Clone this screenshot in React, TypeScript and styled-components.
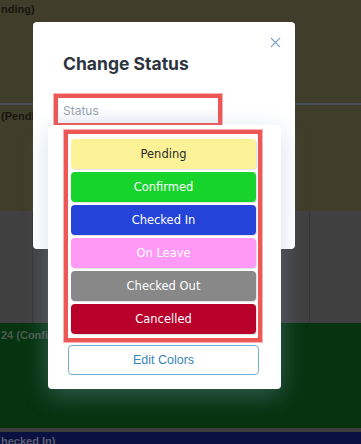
import { createGlobalStyle, styled } from "styled-components";

const GlobalStyle = createGlobalStyle`
  body {
    margin: 0;
    background: #3a3a3a;
    font-family: "DejaVu Sans", sans-serif;
  }
`;

const Page = styled.div`
  position: relative;
  width: 361px;
  height: 444px;
  overflow: hidden;
`;

const Calendar = styled.div`
  display: flex;
  flex-direction: column;
`;

const Band = styled.div<{ $bg: string; $h: number; $fg?: string }>`
  height: ${(p) => p.$h}px;
  background: ${(p) => p.$bg};
  color: ${(p) => p.$fg || "#16160e"};
  font-family: "Liberation Sans", Arial, sans-serif;
  font-weight: 700;
  font-size: 11px;
  padding-left: 1px;
  box-sizing: border-box;
  overflow: hidden;
`;

const BandText = styled.div<{ $top: number }>`
  padding-top: ${(p) => p.$top}px;
  white-space: nowrap;
`;

const Rule = styled.div<{ $bg: string; $h: number }>`
  height: ${(p) => p.$h}px;
  background: ${(p) => p.$bg};
`;

const GridBand = styled.div`
  height: 112px;
  display: grid;
  grid-template-columns: 33px 277px 1fr;
  background: #404040;
`;

const GridCell = styled.div`
  border-right: 1px solid #363636;
  &:last-child {
    border-right: none;
  }
`;

const Modal = styled.div`
  position: absolute;
  left: 33px;
  top: 22px;
  width: 262px;
  height: 227px;
  background: #ffffff;
  border-radius: 4px;
  box-sizing: border-box;
  padding: 30px 21px 0 21px;
`;

const Close = styled.button`
  position: absolute;
  right: 14px;
  top: 15px;
  width: 11px;
  height: 11px;
  padding: 0;
  border: none;
  background: none;
  display: flex;
`;

const Title = styled.h2`
  margin: 0 0 0 9px;
  font-family: Inter, sans-serif;
  font-weight: 700;
  font-size: 17.5px;
  line-height: 24px;
  color: #2c3440;
`;

const Highlight = styled.div`
  border: 4px solid #ef5656;
  box-shadow: 0 0 0 1px rgba(239, 86, 86, 0.45);
`;

const StatusBox = styled(Highlight)`
  margin-top: 18px;
  width: 160px;
  height: 25px;
`;

const StatusInput = styled.div`
  height: 100%;
  background: linear-gradient(#ffffff 40%, #f1f4f8);
  font-family: Inter, sans-serif;
  font-size: 12px;
  color: #9aa3ad;
  display: flex;
  align-items: center;
  padding-left: 5px;
`;

const Dropdown = styled.div`
  position: absolute;
  left: 48px;
  top: 125px;
  width: 233px;
  height: 264px;
  background: #ffffff;
  border-radius: 4px;
  box-sizing: border-box;
  padding: 5px 19px 0 16px;
  box-shadow: 0 6px 24px rgba(140, 170, 210, 0.35);
  display: flex;
  flex-direction: column;
`;

const OptionList = styled(Highlight)`
  display: flex;
  flex-direction: column;
  gap: 3px;
  padding: 5px 2px 4px 3px;
`;

const Option = styled.div<{ $bg: string; $fg: string }>`
  height: 30px;
  border-radius: 4px;
  background: ${(p) => p.$bg};
  color: ${(p) => p.$fg};
  display: flex;
  align-items: center;
  justify-content: center;
  font-size: 11.5px;
  box-shadow: 1px 1px 1px rgba(0, 0, 0, 0.12);
`;

const EditButton = styled.button`
  margin: 3px 3px 0 4px;
  height: 30px;
  border: 1px solid #72acd0;
  border-radius: 4px;
  background: #ffffff;
  color: #3b84b6;
  font-family: "Liberation Sans", Arial, sans-serif;
  font-size: 12.5px;
`;

const statuses = [
  { label: "Pending", bg: "#fbf196", fg: "#2a2a2a" },
  { label: "Confirmed", bg: "#16d42b", fg: "#ffffff" },
  { label: "Checked In", bg: "#2444d9", fg: "#ffffff" },
  { label: "On Leave", bg: "#ff99f6", fg: "#ffffff" },
  { label: "Checked Out", bg: "#888888", fg: "#ffffff" },
  { label: "Cancelled", bg: "#b8002a", fg: "#ffffff" },
];

export default function App() {
  return (
    <Page>
      <GlobalStyle />
      <Calendar>
        <Band $bg="#403e2a" $h={103}>
          <BandText $top={3}>nding)</BandText>
        </Band>
        <Rule $bg="#4b505e" $h={2} />
        <Band $bg="#403e2a" $h={106}>
          <BandText $top={5}>(Pending)</BandText>
        </Band>
        <GridBand>
          <GridCell />
          <GridCell />
          <GridCell />
        </GridBand>
        <Band $bg="#063410" $h={105} $fg="#4c5a4e">
          <BandText $top={6}>24 (Confirmed)</BandText>
        </Band>
        <Rule $bg="#3c3c3c" $h={4} />
        <Band $bg="#0a1040" $h={12} $fg="#5a5d70">
          <BandText $top={3}>hecked In)</BandText>
        </Band>
      </Calendar>

      <Modal>
        <Close aria-label="Close">
          <svg width="11" height="11" viewBox="0 0 11 11">
            <path d="M1 1 L10 10 M10 1 L1 10" stroke="#7ea6c6" strokeWidth="1.2" fill="none" />
          </svg>
        </Close>
        <Title>Change Status</Title>
        <StatusBox>
          <StatusInput>Status</StatusInput>
        </StatusBox>
      </Modal>

      <Dropdown>
        <OptionList>
          {statuses.map((s) => (
            <Option key={s.label} $bg={s.bg} $fg={s.fg}>
              {s.label}
            </Option>
          ))}
        </OptionList>
        <EditButton>Edit Colors</EditButton>
      </Dropdown>
    </Page>
  );
}
